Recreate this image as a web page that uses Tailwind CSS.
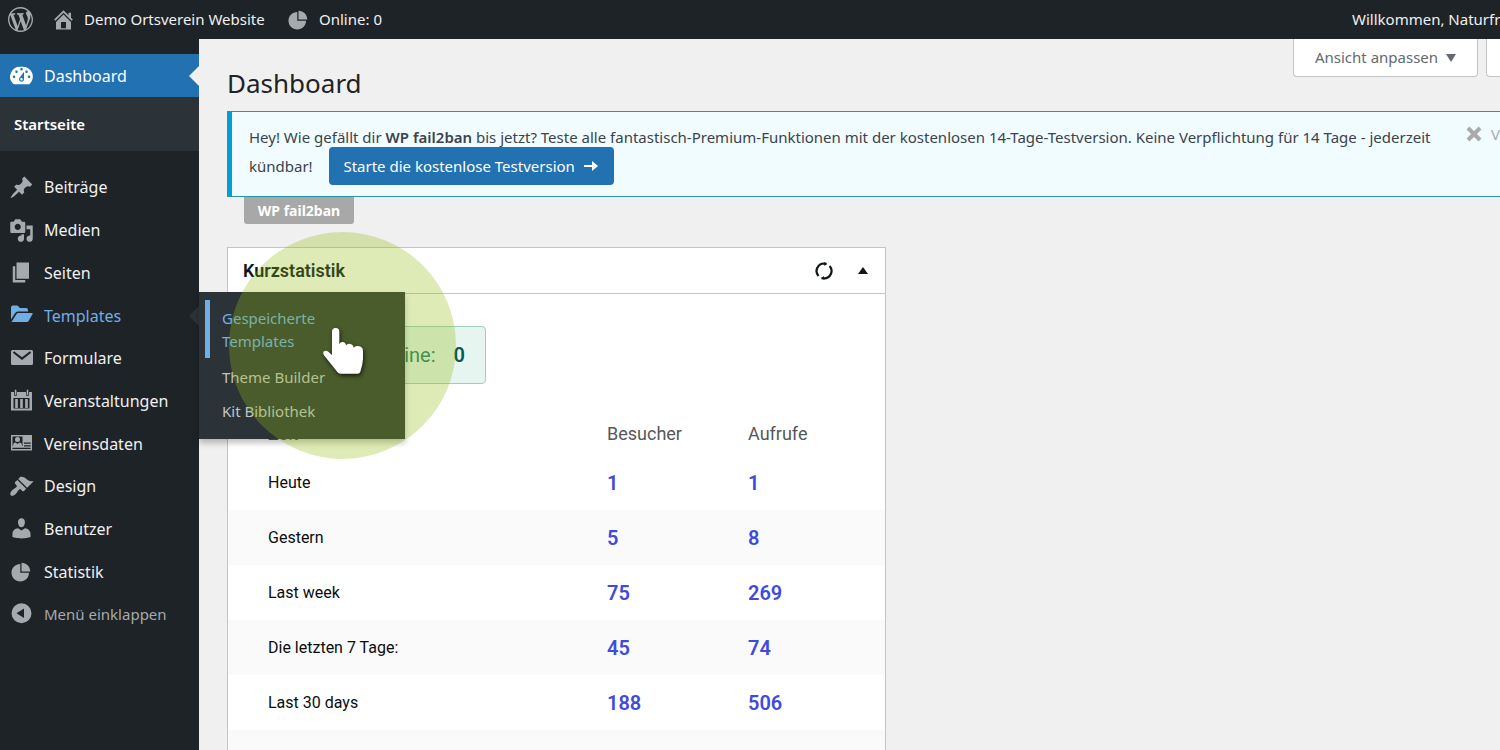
<!DOCTYPE html>
<html lang="de">
<head>
<meta charset="utf-8">
<title>Dashboard</title>
<script src="https://cdn.jsdelivr.net/npm/@tailwindcss/browser@4"></script>
</head>
<body class="bg-[#f0f0f1]">
<div class="relative flex h-screen flex-col overflow-hidden bg-[#f0f0f0] font-['Noto_Sans',sans-serif] text-[15px] text-[#3c434a]">

  <!-- Admin bar -->
  <header class="flex h-[39px] shrink-0 items-center bg-[#1d2327] text-[#f0f0f1]">
    <a href="#" aria-label="WordPress" class="ml-2 text-[#a7aaad]">
      <svg class="size-[25px]" viewBox="0 0 20 20" fill="currentColor"><path d="M20 10c0-5.51-4.49-10-10-10C4.48 0 0 4.49 0 10c0 5.52 4.48 10 10 10 5.51 0 10-4.48 10-10zM7.78 15.37L4.37 6.22c.55-.02 1.17-.08 1.17-.08.5-.06.44-1.13-.06-1.11 0 0-1.45.11-2.37.11-.18 0-.37 0-.58-.01C4.12 2.69 6.87 1.11 10 1.11c2.33 0 4.45.87 6.05 2.34-.68-.11-1.65.39-1.65 1.58 0 .74.45 1.36.9 2.1.35.61.55 1.36.55 2.46 0 1.49-1.4 5-1.4 5l-3.03-8.37c.54-.02.82-.17.82-.17.5-.05.44-1.25-.06-1.22 0 0-1.44.12-2.38.12-.87 0-2.33-.12-2.33-.12-.5-.03-.56 1.2-.06 1.22l.92.08 1.26 3.41zM17.41 10c.24-.64.74-1.87.43-4.25.7 1.29 1.05 2.71 1.05 4.25 0 3.29-1.73 6.24-4.4 7.78.97-2.59 1.94-5.2 2.92-7.78zM6.1 18.09C3.12 16.65 1.11 13.53 1.11 10c0-1.3.23-2.48.72-3.59C3.25 10.3 4.67 14.2 6.1 18.09zm4.03-6.63l2.58 6.98c-.86.29-1.76.45-2.71.45-.79 0-1.57-.11-2.29-.33.81-2.38 1.62-4.74 2.42-7.1z"/></svg>
    </a>
    <a href="#" class="ml-[18px] flex w-[235px] items-center gap-2 whitespace-nowrap">
      <svg class="size-[25px] shrink-0 text-[#a7aaad]" viewBox="0 0 20 20" fill="currentColor"><path d="M16 8.5l1.53 1.53-1.06 1.06L10 4.6l-6.47 6.49-1.06-1.06L10 2.5l4 4v-2h2v4zm-6-2.46l6 5.99V18H4v-5.97zM12 17v-5H8v5h4z"/></svg>
      Demo Ortsverein Website
    </a>
    <a href="#" class="flex items-center gap-2">
      <svg class="size-[25px] shrink-0 text-[#a7aaad]" viewBox="0 0 20 20" fill="currentColor"><path d="M10 10V3c3.87 0 7 3.13 7 7h-7zM9 4v7h7c0 3.87-3.13 7-7 7s-7-3.13-7-7 3.13-7 7-7z"/></svg>
      Online: 0
    </a>
    <a href="#" class="ml-auto w-[148px] overflow-hidden whitespace-nowrap">Willkommen, Naturfr</a>
  </header>

  <div class="flex min-h-0 grow">
    <!-- Side menu -->
    <nav class="w-[199px] shrink-0 bg-[#1d2327] pt-[15px] text-base text-[#f0f0f1]">
      <a href="#" class="relative flex h-[43px] items-center gap-[10px] bg-[#2271b1] pl-[9px] text-white">
        <svg class="size-[25px]" viewBox="0 0 20 20" fill="currentColor"><path d="M3.76 17h12.48A7.98 7.98 0 0 0 10 3a8 8 0 0 0-6.24 14zM10 4c.55 0 1 .45 1 1s-.45 1-1 1-1-.45-1-1 .45-1 1-1zM6 6c.55 0 1 .45 1 1s-.45 1-1 1-1-.45-1-1 .45-1 1-1zm8 0c.55 0 1 .45 1 1s-.45 1-1 1-1-.45-1-1 .45-1 1-1zm-5.37 5.55L12 7v6c0 1.1-.9 2-2 2s-2-.9-2-2c0-.57.24-1.08.63-1.45zM4 10c.55 0 1 .45 1 1s-.45 1-1 1-1-.45-1-1 .45-1 1-1zm12 0c.55 0 1 .45 1 1s-.45 1-1 1-1-.45-1-1 .45-1 1-1zm-5 3c0-.55-.45-1-1-1s-1 .45-1 1 .45 1 1 1 1-.45 1-1z"/></svg>
        Dashboard
        <svg class="absolute right-0 h-5 w-[10px] text-[#f0f0f0]" viewBox="0 0 10 20" fill="currentColor"><path d="M10 0v20L0 10z"/></svg>
      </a>
      <a href="#" class="flex h-[54px] items-center bg-[#2c3338] pl-[14px] text-[15px] font-semibold text-white">Startseite</a>

      <ul class="mt-[15px] grid h-[470px] auto-rows-fr [&>li>a]:flex [&>li>a]:h-full [&>li>a]:items-center [&>li>a]:gap-[10px] [&>li>a]:pl-[9px]">
        <li><a href="#">
          <svg class="size-[25px] text-[#a7aaad]" viewBox="0 0 20 20" fill="currentColor"><path d="M10.44 3.02l1.82-1.82 6.36 6.35-1.83 1.82c-1.05-.68-2.48-.57-3.41.36l-.75.75c-.92.93-1.04 2.35-.35 3.41l-1.83 1.82-2.41-2.41-2.8 2.79c-.42.42-3.38 2.71-3.8 2.29s1.86-3.39 2.28-3.81l2.79-2.79L4.1 9.36l1.83-1.82c1.05.69 2.48.57 3.4-.36l.75-.75c.93-.92 1.05-2.35.36-3.41z"/></svg>
          Beiträge</a></li>
        <li><a href="#">
          <svg class="size-[25px] text-[#a7aaad]" viewBox="0 0 20 20" fill="currentColor"><path d="M13 11V4c0-.55-.45-1-1-1h-1.67L9 1H5L3.67 3H2c-.55 0-1 .45-1 1v7c0 .55.45 1 1 1h10c.55 0 1-.45 1-1zM7 4.5c1.38 0 2.5 1.12 2.5 2.5S8.38 9.5 7 9.5 4.5 8.38 4.5 7 5.62 4.5 7 4.5zM14 6h5v10.5c0 1.38-1.12 2.5-2.5 2.5S14 17.88 14 16.5s1.12-2.5 2.5-2.5c.17 0 .34.02.5.05V9h-3V6zm-4 8.05V13h2v3.5c0 1.38-1.12 2.5-2.5 2.5S7 17.88 7 16.5 8.12 14 9.5 14c.17 0 .34.02.5.05z"/></svg>
          Medien</a></li>
        <li><a href="#">
          <svg class="size-[25px] text-[#a7aaad]" viewBox="0 0 20 20" fill="currentColor"><path d="M6 15V2h10v13H6zm-1 1h8v2H3V5h2v11z"/></svg>
          Seiten</a></li>
        <li class="relative"><a href="#" class="text-[#72aee6]">
          <svg class="size-[25px]" viewBox="0 0 25 25" fill="currentColor"><path d="M2 4.500q0-2 2-2h4.500l2.500 2.500h6q2 0 2 2v1.500H9q-2 0-3 1.800L2 16.500zM2.500 19l5-8q.6-1 1.800-1H23q1 0 .6 1l-4 7q-.6 1-1.800 1z"/></svg>
          Templates</a>
          <svg class="absolute top-3 right-0 h-5 w-[10px] text-[#2c3338]" viewBox="0 0 10 20" fill="currentColor"><path d="M10 0v20L0 10z"/></svg>
          <!-- Fly-out submenu -->
          <ul class="absolute -top-[2px] left-full z-10 w-[206px] bg-[#2c3338] pt-2 pb-[10px] text-[15px] text-[#c3c4c7] shadow-[0_4px_6px_rgba(0,0,0,0.25)]">
            <li class="ml-[6px] flex h-[58px] items-center border-l-[5px] border-[#72aee6] pt-[2px] pl-3"><a href="#" class="leading-[23px] text-[#72aee6]">Gespeicherte<br>Templates</a></li>
            <li class="flex h-9 items-center pt-[2px] pl-[23px]"><a href="#">Theme Builder</a></li>
            <li class="flex h-[35px] items-center pl-[23px]"><a href="#">Kit Bibliothek</a></li>
          </ul>
        </li>
        <li><a href="#">
          <svg class="size-[25px] text-[#a7aaad]" viewBox="0 0 25 25" fill="currentColor"><path fill-rule="evenodd" d="M3.500 4h19q1.500 0 1.500 1.500v12q0 1.500-1.500 1.500h-19Q2 19 2 17.500V5.500Q2 4 3.500 4zM3.800 6.700l9.200 7.300 9.200-7.300-1.300-1.400-7.900 6-7.900-6z"/></svg>
          Formulare</a></li>
        <li><a href="#">
          <svg class="size-[25px] text-[#a7aaad]" viewBox="0 0 25 25" fill="currentColor"><path fill-rule="evenodd" d="M2 4h3v2.500q0 1.500 1.500 1.500T8 6.500V4h9v2.500q0 1.500 1.500 1.500T20 6.500V4h3v18.500H2zM4.500 10v10.500h16V10zM6.200 11h2.600v9H6.200zM11.200 11h2.600v9h-2.600zM16.200 11h2.600v9h-2.600zM5.800 2.500q0-.9.800-.9t.8.900v4q0 .7-.8.700t-.8-.7zM17.700 2.500q0-.9.800-.9t.8.900v4q0 .7-.8.700t-.8-.7z"/></svg>
          Veranstaltungen</a></li>
        <li><a href="#">
          <svg class="size-[25px] text-[#a7aaad]" viewBox="0 0 25 25" fill="currentColor"><path fill-rule="evenodd" d="M2 4h21v15.500H2zM3.500 5.500v9.500h10V5.500zM15 11.500v1.200h6.700v-1.200zM15 14.200v1.200h6.700v-1.200zM3.500 16.800V18h18.200v-1.200z"/><circle cx="8.500" cy="8.500" r="2.500"/><path d="M4 15q0-3.500 2.500-3.500l2 1.500 2-1.500Q13 11.500 13 15z"/></svg>
          Vereinsdaten</a></li>
        <li><a href="#">
          <svg class="size-[25px] text-[#a7aaad]" viewBox="0 0 20 20" fill="currentColor"><path d="M14.480 11.060L7.410 3.990l1.500-1.500c.5-.56 2.300-.47 3.510.32 1.210.8 1.430 1.280 2.910 2.100 1.180.64 2.450 1.260 4.450.85zm-.71.71L6.700 4.700 4.930 6.470c-.39.39-.39 1.020 0 1.410l1.060 1.060c.39.39.39 1.030 0 1.420-.6.6-1.430 1.110-2.210 1.690-.35.26-.7.53-1.010.84C1.430 14.230.4 16.080 1.400 17.070c.99 1 2.840-.03 4.180-1.360.31-.31.58-.66.85-1.020.57-.78 1.080-1.610 1.690-2.210.39-.39 1.020-.39 1.410 0l1.060 1.060c.39.39 1.020.39 1.410 0z"/></svg>
          Design</a></li>
        <li><a href="#">
          <svg class="size-[25px] text-[#a7aaad]" viewBox="0 0 20 20" fill="currentColor"><path d="M10 8.250c-2.270 0-2.730-3.440-2.730-3.440C7 3.020 7.820 1 9.970 1c2.160 0 2.980 2.020 2.710 3.810 0 0-.41 3.440-2.680 3.440zm0 2.570L12.720 9c2.390 0 4.520 2.330 4.520 4.530v2.490s-3.650 1.130-7.240 1.130c-3.650 0-7.240-1.130-7.240-1.130v-2.490c0-2.250 1.940-4.480 4.470-4.480z"/></svg>
          Benutzer</a></li>
        <li><a href="#">
          <svg class="size-[25px] text-[#a7aaad]" viewBox="0 0 20 20" fill="currentColor"><path d="M10 10V3c3.870 0 7 3.130 7 7h-7zM9 4v7h7c0 3.870-3.130 7-7 7s-7-3.130-7-7 3.130-7 7-7z"/></svg>
          Statistik</a></li>
        <li><button type="button" class="flex h-full items-center gap-[10px] pl-[9px] text-[15px] text-[#a7aaad]">
          <svg class="size-[25px]" viewBox="0 0 20 20" fill="currentColor"><path fill-rule="evenodd" d="M10 1a8 8 0 1 0 0 16 8 8 0 0 0 0-16zm2 4.200v7.600L6 9z"/></svg>
          Menü einklappen</button></li>
      </ul>
    </nav>

    <!-- Content -->
    <main class="min-w-0 grow pl-7">
      <div class="flex h-[72px] items-start justify-between">
        <h1 class="pt-6 text-[26px] leading-10 text-[#1d2327]">Dashboard</h1>
        <div class="flex gap-2">
          <button type="button" class="flex h-[38px] w-[185px] items-center justify-center gap-2 rounded-b border border-t-0 border-[#c3c4c7] bg-white text-[#646970]">
            Ansicht anpassen
            <svg class="h-2 w-[10px]" viewBox="0 0 10 8" fill="currentColor"><path d="M0 0h10L5 8z"/></svg>
          </button>
          <div class="h-[38px] w-[14px] rounded-bl border-b border-l border-[#c3c4c7] bg-white"></div>
        </div>
      </div>

      <section class="flex h-[86px] items-start border-y border-l-[5px] border-y-[#2a93b5] border-l-[#00a0d2] bg-[#f0fcff] pt-[11px] pl-[17px] whitespace-nowrap">
        <div class="grow leading-7">
          <p>Hey! Wie gefällt dir <b class="font-semibold">WP fail2ban</b> bis jetzt? Teste alle fantastisch-Premium-Funktionen mit der kostenlosen 14-Tage-Testversion. Keine Verpflichtung für 14 Tage - jederzeit</p>
          <div class="flex h-[30px] items-center gap-4">
            <span>kündbar!</span>
            <button type="button" class="flex h-[38px] w-[285px] items-center justify-center gap-2 rounded bg-[#2271b1] text-white">
              Starte die kostenlose Testversion
              <svg class="h-3 w-4" viewBox="0 0 16 12" fill="none" stroke="currentColor" stroke-width="2"><path d="M1 6h12"/><path fill="currentColor" stroke="none" d="M9 1l6 5-6 5z"/></svg>
            </button>
          </div>
        </div>
        <button type="button" class="flex w-[34px] shrink-0 items-center gap-[9px] overflow-hidden text-[#aaaaaa]">
          <svg class="size-4 shrink-0" viewBox="0 0 16 16" fill="none" stroke="currentColor" stroke-width="4"><path d="M2 2l12 12M14 2L2 14"/></svg>
          V
        </button>
      </section>
      <div class="ml-[17px] flex h-[27px] w-[110px] items-center justify-center rounded-b-[3px] bg-[#a8a8a8] text-sm font-bold text-white">WP fail2ban</div>

      <section class="mt-[23px] w-[659px] border border-[#c3c4c7] bg-white font-[Roboto,sans-serif]">
        <div class="flex h-[46px] items-center border-b border-[#c3c4c7] pr-4 pl-[15px]">
          <h2 class="grow text-lg font-semibold text-[#0c1322]">Kurzstatistik</h2>
          <button type="button" aria-label="Neu laden" class="mr-6 text-[#101517]">
            <svg class="size-[18px]" viewBox="0 0 18 18" fill="none" stroke="currentColor" stroke-width="2.200"><path d="M11.500 1.900 9 1.500A7.500 7.500 0 0 0 3.500 14M14.600 4a7.500 7.500 0 0 1-5.600 12.500l-2.500-.4"/><path fill="currentColor" stroke="none" d="M9 0l3 2-2.500 2zM9.500 18l-3-2 2.500-2z"/></svg>
          </button>
          <button type="button" aria-label="Zuklappen" class="text-[#101517]">
            <svg class="h-2 w-3" viewBox="0 0 12 8" fill="currentColor"><path d="M1 7h10L6 0z"/></svg>
          </button>
        </div>
        <div class="mt-8 ml-[39px] flex h-[58px] w-[219px] items-center justify-end gap-[18px] rounded border border-[#9fcfc0] bg-[#e6f5f0] pr-5 text-xl text-[#24806a]">
          <span>Online:</span><b class="font-semibold text-[#0a5a50]">0</b>
        </div>
        <table class="mt-[22px] w-full table-fixed text-left text-base text-[#0c0c0d]">
          <thead>
            <tr class="h-[49px] text-lg text-[#56585a]">
              <th class="w-[379px] pt-[6px] pl-10 font-normal">Zeit</th>
              <th class="w-[141px] pt-[6px] font-normal">Besucher</th>
              <th class="pt-[6px] font-normal">Aufrufe</th>
            </tr>
          </thead>
          <tbody class="[&_td:first-child]:pl-10 [&_td+td]:text-xl [&_td+td]:font-semibold [&_td+td]:text-[#404bdc] [&>tr]:h-[55px] [&>tr:nth-child(even)]:bg-[#fafafb]">
            <tr><td>Heute</td><td>1</td><td>1</td></tr>
            <tr><td>Gestern</td><td>5</td><td>8</td></tr>
            <tr><td>Last week</td><td>75</td><td>269</td></tr>
            <tr><td>Die letzten 7 Tage:</td><td>45</td><td>74</td></tr>
            <tr><td>Last 30 days</td><td>188</td><td>506</td></tr>
            <tr><td></td><td></td><td></td></tr>
          </tbody>
        </table>
      </section>
    </main>
  </div>

  <!-- Click highlight and pointer -->
  <div class="pointer-events-none absolute top-[232px] left-[229px] z-20 size-[227px] rounded-full bg-[#92bd12]/30"></div>
  <svg class="pointer-events-none absolute top-[315px] left-[310px] z-30 size-[70px] drop-shadow-[1px_2px_2px_rgba(0,0,0,0.7)]" viewBox="0 0 210 210" fill="#ffffff"><path d="M66 50Q66 39 77 39T88 50V88Q91 80 98 81 107 82 108 91 112 85 121 87 130 89 131 98 135 92 144 93 159 95 159 108V132Q158 150 151 170 149 176 143 176H92Q86 176 82 171L42 121Q37 112 43 108 49 105 55 110L66 120z"/></svg>
</div>
</body>
</html>
